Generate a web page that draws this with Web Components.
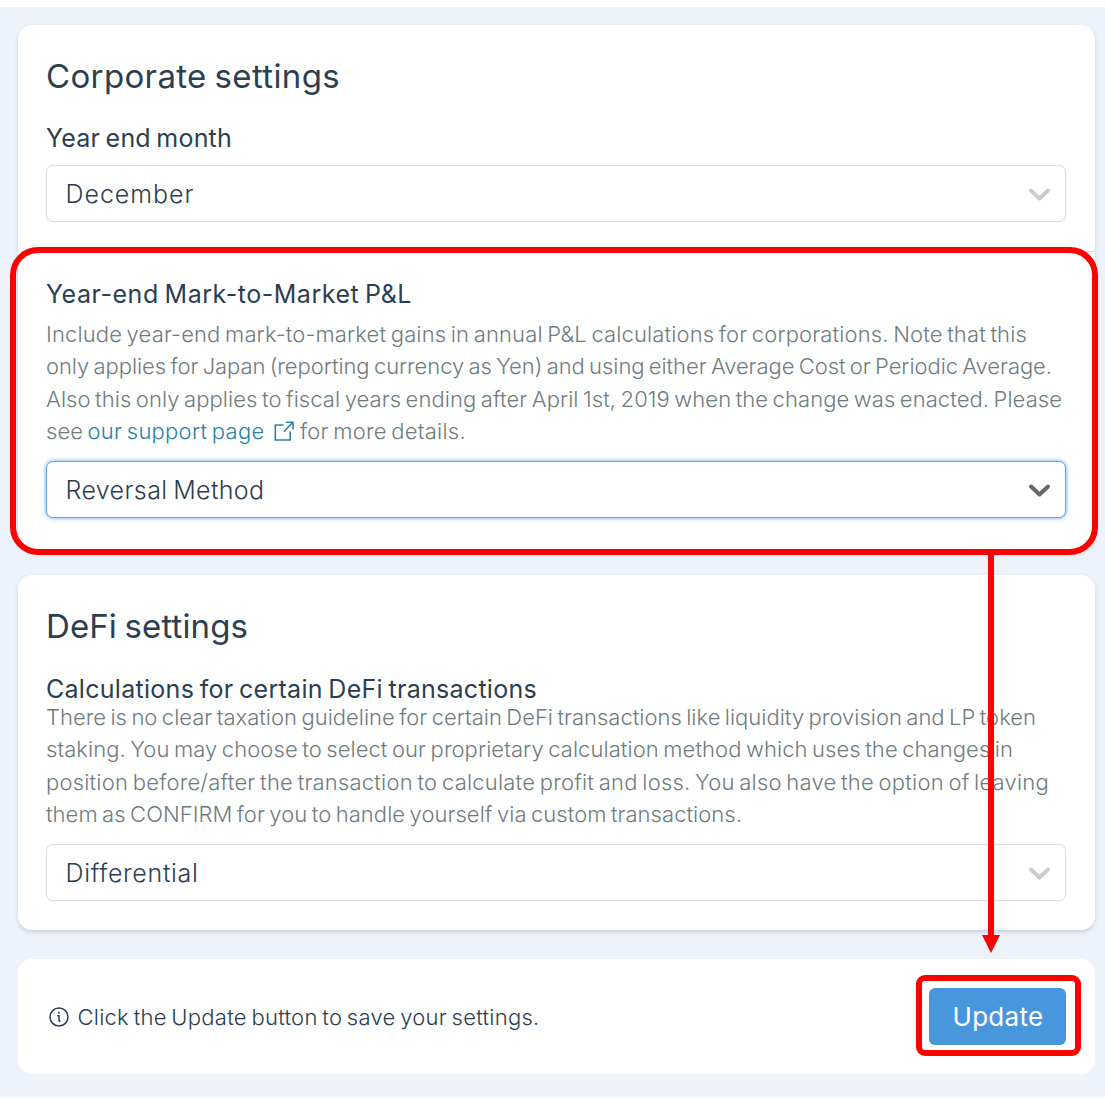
<!DOCTYPE html>
<html lang="en">
<head>
<meta charset="utf-8">
<title>Settings</title>
<style>
  html {
    background: #fff;
  }

  body {
    margin: 0;
    height: 1098px;
    overflow: hidden;
    font-family: Inter, "Open Sans", sans-serif;
    word-spacing: -0.11em;
    color: #2c3e50;
  }
</style>
</head>
<body>
<settings-page>
  <settings-card>
    <settings-title><text-line width="293">Corporate settings</text-line></settings-title>
    <settings-label><text-line width="185">Year end month</text-line></settings-label>
    <select-field style="margin-top: 9px"><text-line width="128">December</text-line></select-field>
    <settings-section>
      <settings-label><text-line width="365">Year-end Mark-to-Market P&amp;L</text-line></settings-label>
      <settings-note style="margin-top: 6px">
        <text-line width="980">Include year-end mark-to-market gains in annual P&amp;L calculations for corporations. Note that this</text-line><br>
        <text-line width="1005">only applies for Japan (reporting currency as Yen) and using either Average Cost or Periodic Average.</text-line><br>
        <text-line width="1015">Also this only applies to fiscal years ending after April 1st, 2019 when the change was enacted. Please</text-line><br>
        <text-line width="36">see</text-line> <support-link><text-line width="176">our support page</text-line></support-link> <text-line width="165">for more details.</text-line>
      </settings-note>
      <select-field focused style="margin-top: 14px"><text-line width="198">Reversal Method</text-line></select-field>
    </settings-section>
  </settings-card>

  <settings-card>
    <settings-title><text-line width="201">DeFi settings</text-line></settings-title>
    <settings-label style="margin-top: 23px"><text-line width="490">Calculations for certain DeFi transactions</text-line></settings-label>
    <settings-note style="margin-top: -6px">
      <text-line width="989">There is no clear taxation guideline for certain DeFi transactions like liquidity provision and LP token</text-line><br>
      <text-line width="966">staking. You may choose to select our proprietary calculation method which uses the changes in</text-line><br>
      <text-line width="1002">position before/after the transaction to calculate profit and loss. You also have the option of leaving</text-line><br>
      <text-line width="695">them as CONFIRM for you to handle yourself via custom transactions.</text-line>
    </settings-note>
    <select-field style="margin-top: 14px"><text-line width="132">Differential</text-line></select-field>
  </settings-card>

  <update-bar>
    <text-line width="461">Click the Update button to save your settings.</text-line>
    <text-line slot="action" width="90">Update</text-line>
  </update-bar>

  <guide-overlay slot="overlay"></guide-overlay>
</settings-page>

<script>
function define(name, html) {
  customElements.define(name, class extends HTMLElement {
    constructor() {
      super();
      this.attachShadow({ mode: "open" });
      this.shadowRoot.innerHTML = html;
    }
  });
}

define("settings-page", `
  <style>
    :host {
      display: block;
      position: relative;
      box-sizing: border-box;
      height: 1098px;
      border-top: 7px solid #fff;
      border-bottom: 1px solid #fff;
      background: #eef3fb;
    }

    .stack {
      display: flex;
      flex-direction: column;
      padding: 18px 10px 0 17.5px;
    }
  </style>
  <div class="stack"><slot></slot></div>
  <slot name="overlay"></slot>
`);

define("settings-card", `
  <style>
    :host {
      display: block;
      box-sizing: border-box;
      padding: 29px 29px 29px 28.5px;
      margin-bottom: 26px;
      border-radius: 14px;
      background: #fff;
      box-shadow: 0 2px 4px rgba(44, 62, 80, 0.2);
    }

    :host(:nth-of-type(2)) {
      margin-bottom: 29px;
    }
  </style>
  <slot></slot>
`);

define("settings-section", `
  <style>
    :host {
      display: block;
      margin: 29px -29px 0 -28.5px;
      padding: 2px 29px 2px 28.5px;
      border-top: 1px solid #dee2e6;
    }
  </style>
  <slot></slot>
`);

define("settings-title", `
  <style>
    :host {
      display: block;
      font-size: 33px;
      line-height: 44px;
    }
  </style>
  <slot></slot>
`);

define("settings-label", `
  <style>
    :host {
      display: block;
      margin-top: 22px;
      font-size: 25px;
      line-height: 36px;
    }
  </style>
  <slot></slot>
`);

define("settings-note", `
  <style>
    :host {
      display: block;
      font-size: 22px;
      font-weight: 340;
      line-height: 32.3px;
      color: #6f7c7e;
      white-space: nowrap;
    }
  </style>
  <slot></slot>
`);

define("support-link", `
  <style>
    a {
      color: #2980a8;
      font-weight: 360;
    }

    svg {
      margin: 0 1px 0 10px;
      vertical-align: -2px;
    }
  </style>
  <a><slot></slot><svg width="20" height="20" viewBox="0 0 20 20" fill="none" stroke="currentColor" stroke-width="1.6">
    <path d="M9.5 4H1.3v15h14.9v-8.5M12 1.2h7v7M19 1.2L9.8 10.8"/>
  </svg></a>
`);

define("select-field", `
  <style>
    :host {
      display: flex;
      align-items: center;
      justify-content: space-between;
      box-sizing: border-box;
      height: 57px;
      padding: 1px 14px 0 18.5px;
      border: 1px solid #dcdfe1;
      border-radius: 7px;
      background: #fff;
      box-shadow: 0 0 1px #dcdfe1;
      font-size: 25px;
      font-weight: 320;
      color: #2c3e50;
    }

    :host([focused]) {
      border-color: #65a6df;
      box-shadow: 0 0 4px #5aa5e6;
    }

    svg {
      margin-top: 1px;
      stroke: #ccc;
    }

    :host([focused]) svg {
      stroke: #666;
    }
  </style>
  <slot></slot>
  <svg width="23" height="15" viewBox="0 0 23 15" fill="none" stroke-width="4" stroke-linecap="round" stroke-linejoin="round">
    <path d="M3 3.5l8.5 8 8.5-8"/>
  </svg>
`);

define("update-bar", `
  <style>
    :host {
      display: flex;
      align-items: center;
      box-sizing: border-box;
      height: 115px;
      padding: 0 29px 0 31px;
      border-radius: 14px;
      background: #fff;
      font-size: 22px;
      font-weight: 330;
    }

    .icon {
      margin-right: 9px;
    }

    button {
      margin: 0 0 0 auto;
      width: 137px;
      height: 57px;
      padding: 0 0 0 1px;
      border: 0;
      border-radius: 6px;
      background: #4897dd;
      color: #fff;
      font: 400 26px Inter, sans-serif;
    }
  </style>
  <svg class="icon" width="20" height="20" viewBox="0 0 20 20" fill="none" stroke="currentColor" stroke-width="1.5">
    <circle cx="10" cy="10" r="9"/>
    <path d="M8.3 8.8h1.7v4.7q0 .9 1.4.8"/>
    <circle cx="9.8" cy="5.8" r="1" fill="currentColor" stroke="none"/>
  </svg>
  <slot></slot>
  <button><slot name="action"></slot></button>
`);

// red frames and the arrow that lie over the cards
define("guide-overlay", `
  <style>
    :host {
      position: absolute;
      inset: -7px 0 0 0;
      pointer-events: none;
    }

    svg {
      display: block;
    }
  </style>
  <svg width="1105" height="1098" viewBox="0 0 1105 1098" fill="none" stroke="#f00" stroke-width="6">
    <rect x="13" y="250" width="1082" height="302" rx="25"/>
    <rect x="919" y="978" width="159" height="75" rx="6"/>
    <path d="M991 552v384"/>
    <path d="M982 935h18l-9 18z" fill="#f00" stroke="none"/>
  </svg>
`);

// one line of text, tracked so that it fills the given width
class TextLine extends HTMLElement {
  constructor() {
    super();
    this.attachShadow({ mode: "open" });
    this.shadowRoot.innerHTML = `
      <style>
        :host {
          display: inline-block;
          white-space: nowrap;
        }
      </style>
      <slot></slot>
    `;
  }

  connectedCallback() {
    const width = Number(this.getAttribute("width"));
    const count = this.textContent.length;
    const spacing = (width + 1 - this.getBoundingClientRect().width) / count;
    this.style.letterSpacing = spacing.toFixed(3) + "px";
  }
}

customElements.define("text-line", TextLine);
</script>
</body>
</html>
